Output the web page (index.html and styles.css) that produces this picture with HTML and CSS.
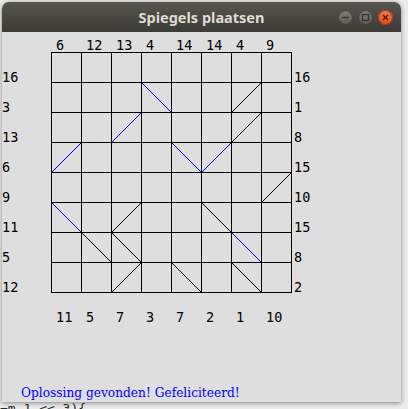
FILE: index.html
```html
<!DOCTYPE html>
<html lang="nl">
<head>
<meta charset="utf-8">
<title>Spiegels plaatsen</title>
<link rel="stylesheet" href="styles.css">
</head>
<body>
<div class="window">
  <div class="titlebar">
    <span></span>
    <span class="title">Spiegels plaatsen</span>
    <div class="controls">
      <span class="btn btn-min"><svg viewBox="0 0 15 15"><line x1="4" y1="7.5" x2="11" y2="7.5"/></svg></span>
      <span class="btn btn-max"><svg viewBox="0 0 15 15"><rect x="4.5" y="4.5" width="6" height="6"/></svg></span>
      <span class="btn btn-close"><svg viewBox="0 0 15 15"><line x1="5" y1="5" x2="10" y2="10"/><line x1="10" y1="5" x2="5" y2="10"/></svg></span>
    </div>
  </div>
  <div class="content">
    <div class="area">
      <div class="top-labels">
        <span>6</span><span>12</span><span>13</span><span>4</span><span>14</span><span>14</span><span>4</span><span>9</span>
      </div>
      <div class="side-labels left">
        <span>16</span><span>3</span><span>13</span><span>6</span><span>9</span><span>11</span><span>5</span><span>12</span>
      </div>
      <div class="board">
        <!-- row 0 -->
        <div class="cell"></div><div class="cell"></div><div class="cell"></div><div class="cell"></div><div class="cell"></div><div class="cell"></div><div class="cell"></div><div class="cell"></div>
        <!-- row 1 -->
        <div class="cell"></div><div class="cell"></div><div class="cell"></div>
        <div class="cell blu"><svg viewBox="0 0 29 29"><line x1="0" y1="0" x2="29" y2="29"/></svg></div>
        <div class="cell"></div><div class="cell"></div>
        <div class="cell blk"><svg viewBox="0 0 29 29"><line x1="0" y1="29" x2="29" y2="0"/></svg></div>
        <div class="cell"></div>
        <!-- row 2 -->
        <div class="cell"></div><div class="cell"></div>
        <div class="cell blu"><svg viewBox="0 0 29 29"><line x1="0" y1="29" x2="29" y2="0"/></svg></div>
        <div class="cell"></div><div class="cell"></div><div class="cell"></div>
        <div class="cell blk"><svg viewBox="0 0 29 29"><line x1="0" y1="29" x2="29" y2="0"/></svg></div>
        <div class="cell"></div>
        <!-- row 3 -->
        <div class="cell blu"><svg viewBox="0 0 29 29"><line x1="0" y1="29" x2="29" y2="0"/></svg></div>
        <div class="cell"></div><div class="cell"></div><div class="cell"></div>
        <div class="cell blu"><svg viewBox="0 0 29 29"><line x1="0" y1="0" x2="29" y2="29"/></svg></div>
        <div class="cell blu"><svg viewBox="0 0 29 29"><line x1="0" y1="29" x2="29" y2="0"/></svg></div>
        <div class="cell"></div><div class="cell"></div>
        <!-- row 4 -->
        <div class="cell"></div><div class="cell"></div><div class="cell"></div><div class="cell"></div><div class="cell"></div><div class="cell"></div><div class="cell"></div>
        <div class="cell blk"><svg viewBox="0 0 29 29"><line x1="0" y1="29" x2="29" y2="0"/></svg></div>
        <!-- row 5 -->
        <div class="cell blu"><svg viewBox="0 0 29 29"><line x1="0" y1="0" x2="29" y2="29"/></svg></div>
        <div class="cell"></div>
        <div class="cell blk"><svg viewBox="0 0 29 29"><line x1="0" y1="29" x2="29" y2="0"/></svg></div>
        <div class="cell"></div><div class="cell"></div>
        <div class="cell blk"><svg viewBox="0 0 29 29"><line x1="0" y1="0" x2="29" y2="29"/></svg></div>
        <div class="cell"></div><div class="cell"></div>
        <!-- row 6 -->
        <div class="cell"></div>
        <div class="cell blk"><svg viewBox="0 0 29 29"><line x1="0" y1="0" x2="29" y2="29"/></svg></div>
        <div class="cell blk"><svg viewBox="0 0 29 29"><line x1="0" y1="0" x2="29" y2="29"/></svg></div>
        <div class="cell"></div><div class="cell"></div><div class="cell"></div>
        <div class="cell blu"><svg viewBox="0 0 29 29"><line x1="0" y1="0" x2="29" y2="29"/></svg></div>
        <div class="cell"></div>
        <!-- row 7 -->
        <div class="cell"></div><div class="cell"></div>
        <div class="cell blk"><svg viewBox="0 0 29 29"><line x1="0" y1="29" x2="29" y2="0"/></svg></div>
        <div class="cell"></div>
        <div class="cell blk"><svg viewBox="0 0 29 29"><line x1="0" y1="0" x2="29" y2="29"/></svg></div>
        <div class="cell"></div>
        <div class="cell blk"><svg viewBox="0 0 29 29"><line x1="0" y1="0" x2="29" y2="29"/></svg></div>
        <div class="cell"></div>
      </div>
      <div class="side-labels right">
        <span>16</span><span>1</span><span>8</span><span>15</span><span>10</span><span>15</span><span>8</span><span>2</span>
      </div>
      <div class="bottom-labels">
        <span>11</span><span>5</span><span>7</span><span>3</span><span>7</span><span>2</span><span>1</span><span>10</span>
      </div>
    </div>
    <p class="message">Oplossing gevonden! Gefeliciteerd!</p>
  </div>
</div>
<div class="behind">=m 1 &lt;&lt; 3){</div>
</body>
</html>
```

FILE: styles.css
```css
html, body {
  margin: 0;
  padding: 0;
}
body {
  width: 408px;
  height: 409px;
  overflow: hidden;
  background: #ececec;
}
.window {
  width: 399px;
  margin: 2px 0 0 2px;
  border-radius: 7px 7px 0 0;
  box-shadow: 0 1px 5px rgba(0, 0, 0, 0.45);
  background: #dedede;
}
.titlebar {
  height: 30px;
  border-radius: 7px 7px 0 0;
  background: linear-gradient(#57564f, #3b3a36);
  display: grid;
  grid-template-columns: 1fr auto 1fr;
  align-items: center;
}
.title {
  font-family: "Noto Sans", "DejaVu Sans", sans-serif;
  font-weight: 700;
  font-size: 14.5px;
  color: #dfdbd2;
  line-height: 30px;
}
.controls {
  display: flex;
  justify-content: flex-end;
  gap: 5px;
  padding-right: 8px;
}
.btn {
  width: 15px;
  height: 15px;
  border-radius: 50%;
  box-sizing: border-box;
  display: block;
}
.btn svg {
  display: block;
  width: 15px;
  height: 15px;
}
.btn-min, .btn-max {
  background: linear-gradient(#807f7a, #5a5955);
  box-shadow: inset 0 0 0 1px #403f3b;
}
.btn-min line, .btn-max rect {
  stroke: #35342f;
  stroke-width: 1.3;
  fill: none;
}
.btn-close {
  background: linear-gradient(#f37a50, #df4a1a);
  box-shadow: inset 0 0 0 1px #9c3a17;
}
.btn-close line {
  stroke: #4a1c0b;
  stroke-width: 1.3;
}
.content {
  height: 370px;
  display: flex;
  flex-direction: column;
}
.area {
  display: grid;
  grid-template-columns: 49px 241px auto;
  grid-template-rows: 20px 241px auto;
  font-family: "DejaVu Sans Mono", monospace;
  font-size: 13.5px;
  color: #000;
}
.top-labels {
  grid-column: 2;
  grid-row: 1;
  display: flex;
  align-items: flex-end;
  line-height: 14px;
  padding-left: 1px;
}
.top-labels span,
.bottom-labels span {
  width: 30px;
  box-sizing: border-box;
  padding-left: 4px;
}
.bottom-labels {
  grid-column: 2;
  grid-row: 3;
  display: flex;
  line-height: 14px;
  padding-top: 17px;
  padding-left: 1px;
}
.side-labels {
  grid-row: 2;
  display: flex;
  flex-direction: column;
}
.side-labels span {
  height: 30px;
  display: flex;
  align-items: flex-end;
  line-height: 10px;
}
.side-labels.left {
  grid-column: 1;
}
.side-labels.right {
  grid-column: 3;
  padding-left: 2px;
}
.board {
  grid-column: 2;
  grid-row: 2;
  display: grid;
  grid-template-columns: repeat(8, 30px);
  grid-auto-rows: 30px;
  border-right: 1px solid #000;
  border-bottom: 1px solid #000;
}
.cell {
  box-sizing: border-box;
  border-top: 1px solid #000;
  border-left: 1px solid #000;
}
.cell svg {
  display: block;
  width: 29px;
  height: 29px;
  overflow: visible;
}
.cell line {
  stroke-width: 1;
  shape-rendering: crispEdges;
}
.blk line {
  stroke: #000;
}
.blu line {
  stroke: #0000ff;
}
.message {
  margin: auto 0 0 0;
  padding: 0 0 2px 19px;
  font-family: "DejaVu Serif", serif;
  font-size: 12.2px;
  line-height: 14px;
  color: #0000ff;
}
.behind {
  margin-top: -1px;
  font-family: "DejaVu Sans Mono", monospace;
  font-size: 13px;
  line-height: 16px;
  color: #2b2b2b;
  white-space: pre;
}
```
